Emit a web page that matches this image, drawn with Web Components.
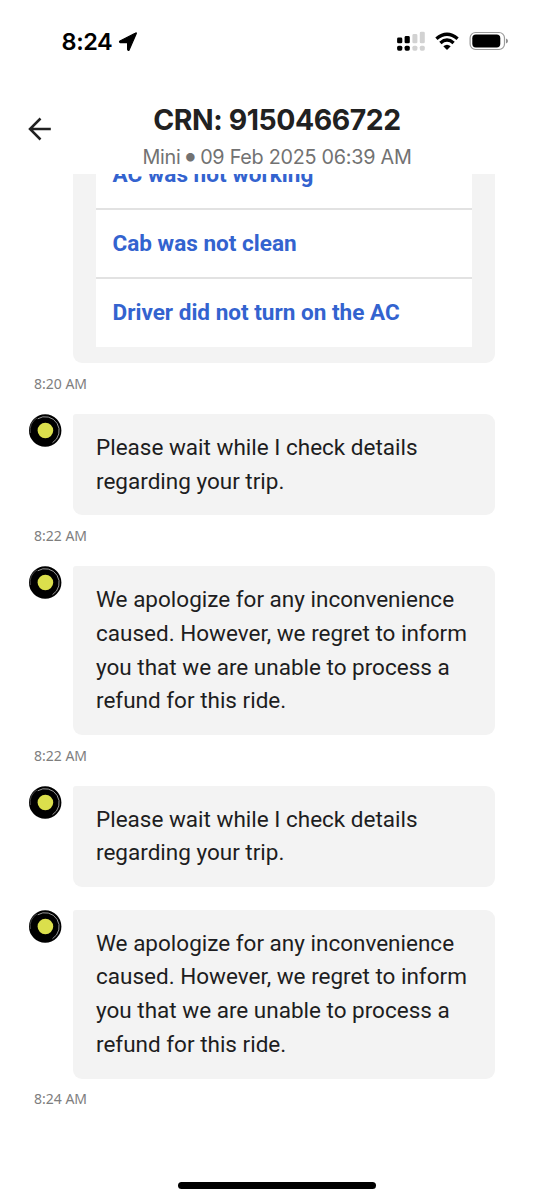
<!DOCTYPE html>
<html lang="en">
<head>
<meta charset="utf-8">
<title>CRN: 9150466722</title>
<style>
html,body{margin:0;background:#fff}
body{width:554px;height:1200px;overflow:hidden;font-family:Roboto,sans-serif;color:#1d1d21}
</style>
</head>
<body>
<support-screen></support-screen>
<script>
const define = (name, html) => customElements.define(name, class extends HTMLElement {
  constructor() {
    super();
    const t = document.createElement('template');
    t.innerHTML = html;
    this.attachShadow({mode: 'open'}).append(t.content.cloneNode(true));
  }
});

define('status-bar', `
<style>
:host{display:flex;align-items:center;height:83px;box-sizing:border-box;padding:0 46px 0 61.5px;font:600 23.5px/28px Inter,sans-serif;color:#000}
span{letter-spacing:-.4px}
.loc{margin-left:5.5px}
.icons{margin:0 0 1px auto}
svg{display:block}
</style>
<span>8:24</span>
<svg class="loc" width="20" height="20" viewBox="0 0 20 20"><path d="M18.3 1.4 11.2 17.8Q10.2 19.2 9.6 17.4V10.6H2.4Q.8 10.1 2 9L17.2 1.3Q18.6.5 18.3 1.4Z" stroke="#000" stroke-width="1.2" stroke-linejoin="round"/></svg>
<svg class="icons" width="112" height="22" viewBox="396 30 112 22">
<g transform="translate(-.4)"><rect x="397.5" y="37.6" width="5.2" height="5.7" rx="1.4"/><rect x="405" y="36" width="5.2" height="7.3" rx="1.4"/><g fill="#d2d2d2"><rect x="412.8" y="34" width="5" height="9.3" rx="1.4"/><rect x="420.2" y="31.7" width="5" height="11.6" rx="1.4"/><rect x="412.8" y="45.7" width="5" height="5" rx="1.6"/><rect x="420.2" y="45.7" width="5" height="5" rx="1.6"/></g><rect x="397.5" y="45.7" width="5.2" height="5" rx="1.6"/><rect x="405" y="45.7" width="5.2" height="5" rx="1.6"/></g>
<g fill="none" stroke="#000" stroke-width="3.4"><path d="M436.4 38.7Q447 29.8 457.6 38.7"/><path d="M440.4 43Q447 37.2 453.6 43"/></g>
<path d="M443.3 46.2Q447 43.2 450.7 46.2L447.5 49.5Q447 50 446.5 49.5Z"/>
<rect x="470.1" y="32.5" width="34.4" height="17" rx="5.5" fill="none" stroke="#9b9b9b" stroke-width="1.2"/>
<rect x="472.3" y="34.6" width="28" height="12.8" rx="3.6"/>
<path d="M506 38.5Q508 39.4 508 41T506 43.5Z" fill="#8d8d8d"/>
</svg>`);

define('trip-header', `
<style>
:host{display:grid;grid-template-columns:80px 1fr 80px;height:91px;background:#fff}
svg{display:block;margin:34px 0 0 28px}
.titles{text-align:center;font-family:Inter,sans-serif;white-space:nowrap}
h1{margin:19px 0 0;font-size:28.4px;line-height:36px;font-weight:700;letter-spacing:-.42px;color:#212121}
p{margin:7px 0 0;font-size:19.8px;line-height:24px;letter-spacing:-.26px;color:#727272}
</style>
<svg width="24" height="24" viewBox="0 0 24 24" fill="none" stroke="#212121" stroke-width="2.5"><path d="M22.8 12H2.2M12.5 1.5 2 12 12.5 22.5"/></svg>
<div class="titles"><h1><slot name="title"></slot></h1><p><slot name="detail"></slot></p></div>`);

define('bot-avatar', `
<style>:host{display:block;width:33px;height:33px}svg{display:block}</style>
<svg width="33" height="33" viewBox="0 0 33 33"><circle cx="16.2" cy="16.5" r="16.2"/><circle cx="16.4" cy="16.5" r="7.8" fill="#dbdf4c"/><path d="M8.7 4.8A14 14 0 1 1 23.5 28.7" fill="none" stroke="#aaa" stroke-width=".9"/><path d="M1.4 19A15.3 15.3 0 0 1 8 3.8" fill="none" stroke="#777" stroke-width=".6"/></svg>`);

define('chat-message', `
<style>
:host{display:grid;grid-template-columns:44px 421.5px;padding-left:29px;font-size:22.5px;line-height:33.8px}
.bubble{background:#f3f3f3;border-radius:3px 9px 9px 9px;padding:16.8px 0 16.7px 23px;white-space:nowrap}
:host([list]) .bubble{padding:0 22.5px 16.6px;border-radius:0 0 9px 9px}
:host([list]) bot-avatar{visibility:hidden}
</style>
<bot-avatar></bot-avatar><div class="bubble"><slot></slot></div>`);

define('time-label', `
<style>:host{display:block;box-sizing:border-box;height:50.8px;padding:10.6px 0 0 34px;font:14px/20px "Noto Sans",sans-serif;color:#7e7e7e}
:host([first]){height:51.2px;padding-top:11px}</style><slot></slot>`);

define('quick-option', `
<style>:host{display:block;box-sizing:border-box;height:69px;padding:16.7px 17px 0;background:#fff;border-bottom:2px solid #e2e2e2;font:700 22.55px/34px Roboto,sans-serif;color:#3363cf}
:host(:last-of-type){border:0;height:67.5px}</style><slot></slot>`);

define('message-list', `
<style>:host{display:flex;flex-direction:column;justify-content:flex-end;height:944px;overflow:hidden}</style><slot></slot>`);

define('home-indicator', `
<style>:host{display:block;width:197.5px;height:7px;border-radius:4px;background:#000;margin:64px 0 0 178.4px}</style>`);

define('support-screen', `
<style>:host{display:block;height:1200px;overflow:hidden}
.gap{height:23px;flex:none}
.dot{font-size:27px;line-height:0;letter-spacing:0;margin:0 -3.1px;vertical-align:-1px}
chat-message,time-label{flex:none}</style>
<status-bar></status-bar>
<trip-header><span slot="title">CRN: 9150466722</span><span slot="detail">Mini <span class="dot">•</span> 09 Feb 2025 06:39 AM</span></trip-header>
<message-list>
<chat-message list><quick-option>AC was not working</quick-option><quick-option>Cab was not clean</quick-option><quick-option>Driver did not turn on the AC</quick-option></chat-message>
<time-label first>8:20 AM</time-label>
<chat-message>Please wait while I check details<br>regarding your trip.</chat-message>
<time-label>8:22 AM</time-label>
<chat-message>We apologize for any inconvenience<br>caused. However, we regret to inform<br>you that we are unable to process a<br>refund for this ride.</chat-message>
<time-label>8:22 AM</time-label>
<chat-message>Please wait while I check details<br>regarding your trip.</chat-message>
<div class="gap"></div>
<chat-message>We apologize for any inconvenience<br>caused. However, we regret to inform<br>you that we are unable to process a<br>refund for this ride.</chat-message>
<time-label style="height:39.5px">8:24 AM</time-label>
</message-list>
<home-indicator></home-indicator>`);
</script>
</body>
</html>
